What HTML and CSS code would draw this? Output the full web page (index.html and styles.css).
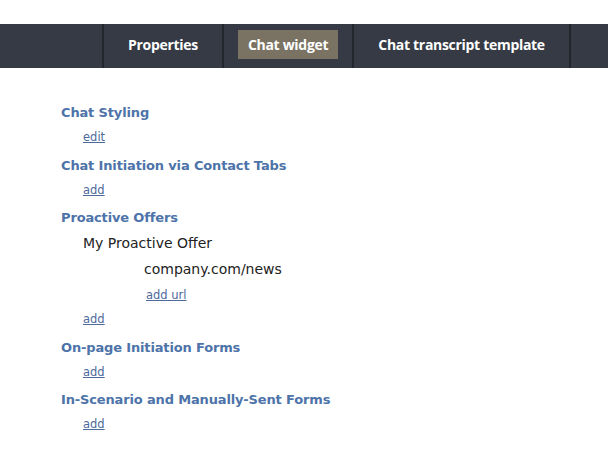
FILE: index.html
```html
<!DOCTYPE html>
<html lang="en">
<head>
	<meta charset="UTF-8">
	<title>Chat widget</title>
	<link rel="stylesheet" href="styles.css">
</head>
<body>
	<div class="topbar">
		<ul class="tabs">
			<li><a href="#">Properties</a></li>
			<li class="on"><a href="#">Chat widget</a></li>
			<li><a href="#">Chat transcript template</a></li>
		</ul>
	</div>
	<div class="content">
		<div class="section">
			<h3>Chat Styling</h3>
			<a class="act" href="#">edit</a>
		</div>
		<div class="section">
			<h3>Chat Initiation via Contact Tabs</h3>
			<a class="act" href="#">add</a>
		</div>
		<div class="section">
			<h3>Proactive Offers</h3>
			<div class="offer">My Proactive Offer</div>
			<div class="url">company.com/news</div>
			<a class="act sub" href="#">add url</a>
			<a class="act" href="#">add</a>
		</div>
		<div class="section">
			<h3>On-page Initiation Forms</h3>
			<a class="act" href="#">add</a>
		</div>
		<div class="section">
			<h3>In-Scenario and Manually-Sent Forms</h3>
			<a class="act" href="#">add</a>
		</div>
	</div>
</body>
</html>
```

FILE: styles.css
```css
*{
	margin: 0;
	padding: 0;
	list-style: none;
}
body{
	background: #fff;
	font-family: "DejaVu Sans", Verdana, sans-serif;
	color: #222;
	padding-top: 24px;
}
.topbar{
	height: 44px;
	background: #353a44;
	display: flex;
}
.tabs{
	display: flex;
	margin-left: 102px;
	border-left: 2px solid #23262d;
}
.tabs li{
	display: flex;
	align-items: center;
	padding: 0 14px 3px;
	border-right: 2px solid #23262d;
}
.tabs a{
	display: block;
	font-family: "Open Sans", "Noto Sans", sans-serif;
	font-weight: 700;
	font-size: 14px;
	letter-spacing: -0.3px;
	color: #fff;
	text-decoration: none;
	line-height: 29px;
	padding: 0 10px;
}
.tabs .on a{
	background: #7a7262;
}
.content{
	padding: 33px 0 0 61px;
}
.section h3{
	font-size: 13px;
	font-weight: bold;
	letter-spacing: -0.15px;
	color: #4d73a9;
	line-height: 24px;
}
.act{
	display: block;
	width: max-content;
	font-size: 11.5px;
	color: #4d6a9a;
	margin-left: 22px;
	line-height: 24px;
	margin-bottom: 4.5px;
}
.offer{
	font-size: 14px;
	margin-left: 22px;
	line-height: 26px;
}
.url{
	font-size: 14px;
	margin-left: 83px;
	line-height: 27px;
}
.act.sub{
	margin-left: 85px;
	margin-bottom: 0;
}
```
